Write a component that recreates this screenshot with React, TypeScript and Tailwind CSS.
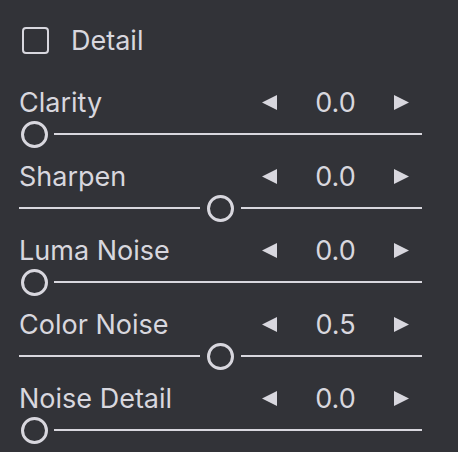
import React from "react";

const C = "#d8d7de";

function TriLeft() {
  return (
    <svg width="15" height="15" viewBox="0 0 15 15" className="block">
      <polygon points="0,7.5 15,0 15,15" fill={C} />
    </svg>
  );
}
function TriRight() {
  return (
    <svg width="15" height="15" viewBox="0 0 15 15" className="block">
      <polygon points="15,7.5 0,0 0,15" fill={C} />
    </svg>
  );
}

function Slider({ mid }: { mid: boolean }) {
  return (
    <div className="flex items-center h-[28px] w-[403px]">
      {mid ? (
        <>
          <div className="h-[2px] w-[181px] bg-[#d8d7de]" />
          <div className="ml-[7px] w-[27px] h-[27px] rounded-full border-[3px] border-[#d8d7de] shrink-0" />
          <div className="ml-[7px] h-[2px] flex-1 bg-[#d8d7de]" />
        </>
      ) : (
        <>
          <div className="ml-[2px] w-[27px] h-[27px] rounded-full border-[3px] border-[#d8d7de] shrink-0" />
          <div className="ml-[6px] h-[2px] flex-1 bg-[#d8d7de]" />
        </>
      )}
    </div>
  );
}

function Row({ label, value, mid }: { label: string; value: string; mid: boolean }) {
  return (
    <div className="mb-[10px]">
      <div className="flex items-center h-[36px] w-[403px]">
        <div className="flex-1 text-[27px] leading-none">{label}</div>
        <div className="flex items-center mr-[13px]">
          <TriLeft />
          <div className="w-[117px] text-center text-[27px] leading-none">{value}</div>
          <TriRight />
        </div>
      </div>
      <Slider mid={mid} />
    </div>
  );
}

export default function App() {
  const rows = [
    { label: "Clarity", value: "0.0", mid: false },
    { label: "Sharpen", value: "0.0", mid: true },
    { label: "Luma Noise", value: "0.0", mid: false },
    { label: "Color Noise", value: "0.5", mid: true },
    { label: "Noise Detail", value: "0.0", mid: false },
  ];
  return (
    <div
      className="w-[458px] h-[452px] bg-[#323338] text-[#d8d7de] pl-[19px] pt-[14px] overflow-hidden"
      style={{ fontFamily: "Inter, 'Noto Sans', sans-serif" }}
    >
      <div className="flex items-center h-[52px] mb-[18px]">
        <div className="ml-[3px] w-[27px] h-[27px] rounded-[4px] border-2 border-[#d8d7de]" />
        <div className="ml-[22px] text-[27px] leading-none">Detail</div>
      </div>
      {rows.map((r) => (
        <Row key={r.label} {...r} />
      ))}
    </div>
  );
}
